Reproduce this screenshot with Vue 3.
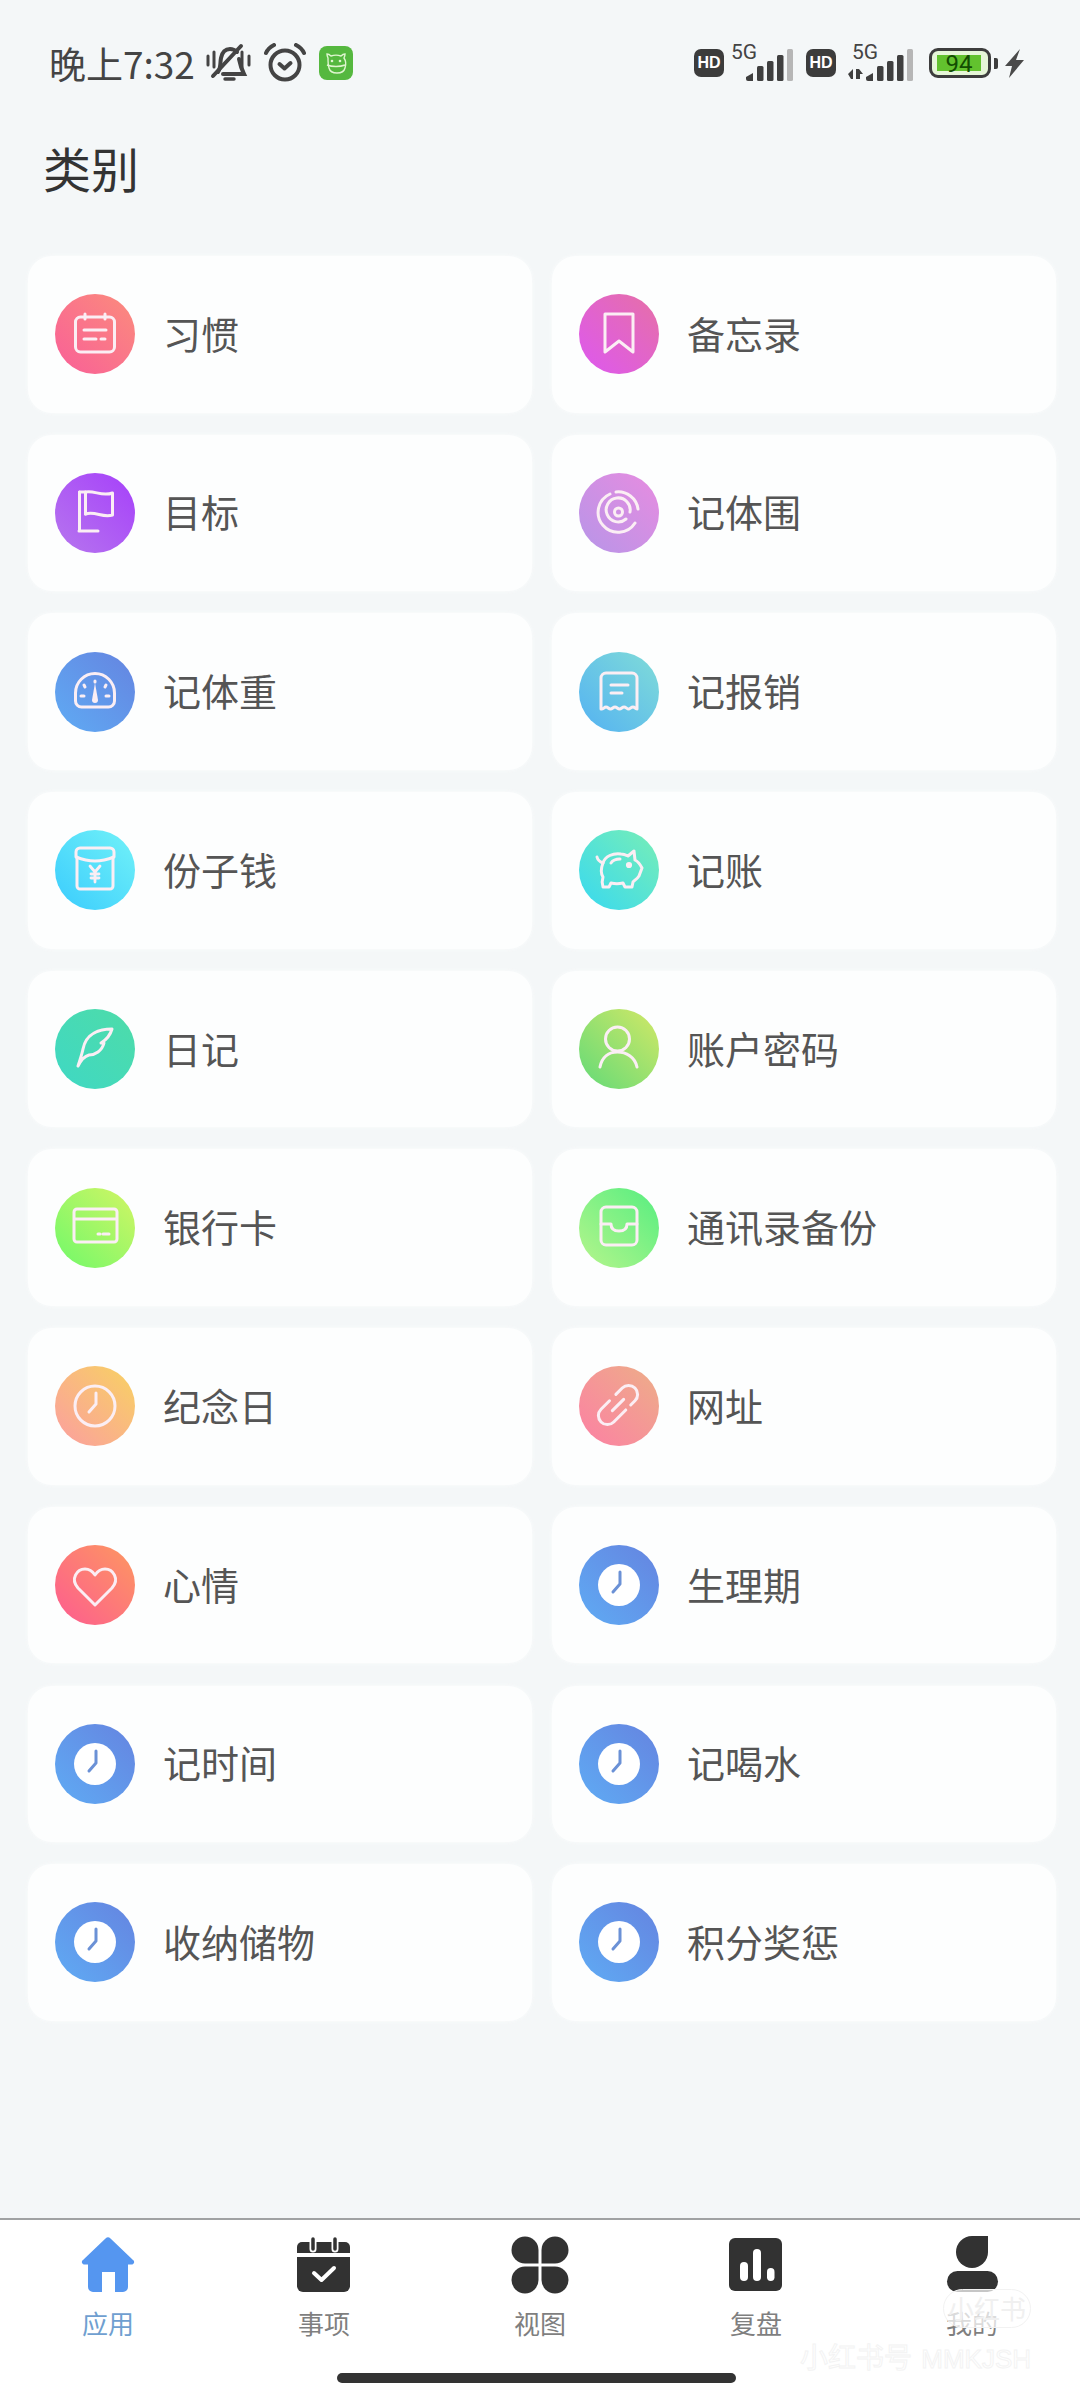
<template>
  <div class="page">
    <header class="status">
      <div class="status-left">
        <span class="time">晚上7:32</span>
        <svg class="bell" width="46" height="40" viewBox="0 0 46 40" fill="none" stroke="#444" stroke-width="4" stroke-linecap="round">
          <path d="M2 13v9M8 9v15M36 9v15M43 13v9" stroke-width="3" />
          <path d="M12 29c3-4 2-9 3-14 1-5 4-9 9-9 3 0 5 1 7 3" />
          <path d="M33 16c1 5 2 9 5 15H17" />
          <path d="M7 33 35 3" />
          <path d="M19 36h9" stroke-width="3.400" />
        </svg>
        <svg class="alarm" width="42" height="40" viewBox="0 0 42 40" fill="none" stroke="#444" stroke-width="4" stroke-linecap="round" stroke-linejoin="round">
          <circle cx="21" cy="22" r="14.500" />
          <path d="M2 10c1.500-3.500 4-6 8-8M40 10c-1.500-3.500-4-6-8-8" />
          <path d="m15.500 21 5 4.500 6-5.500" />
        </svg>
        <svg class="app" width="34" height="34" viewBox="0 0 34 34" fill="none">
          <rect width="34" height="34" rx="8" fill="#55b83f" />
          <g stroke="#dff5cf" stroke-width="1.400">
            <path d="M9 12c-1-2-1-3-1-4 2 0 3 1 4 2 3-1 7-1 10 0 1-1 2-2 4-2 0 1 0 2-1 4 2 3 2 7 1 10-1 4-5 5-8 5s-7-1-8-5c-1-3-1-7-1-10Z" />
            <path d="M8 19c5 2 13 2 18 0" />
          </g>
          <circle cx="13" cy="15" r="1.300" fill="#dff5cf" />
          <circle cx="21" cy="15" r="1.300" fill="#dff5cf" />
        </svg>
      </div>
      <div class="status-right">
        <span class="hd">HD</span>
        <div class="net">
          <span class="net-label">5G</span>
          <svg class="net-bars" width="48" height="32" viewBox="0 0 48 32" fill="#3f3f3f">
            <path d="M0 28l7-4v8H2a2 2 0 0 1-2-2Z" />
            <rect x="11" y="17" width="6.500" height="15" rx="1.500" />
            <rect x="21" y="12" width="6.500" height="20" rx="1.500" />
            <rect x="31" y="6" width="6.500" height="26" rx="1.500" />
            <rect x="41" y="0" width="6" height="32" rx="1.500" fill="#b6b6b6" />
          </svg>
        </div>
        <span class="hd second">HD</span>
        <div class="net net-wide">
          <span class="net-label">5G</span>
          <svg class="net-bars" width="66" height="32" viewBox="0 0 66 32" fill="#3f3f3f">
            <path d="M0 25l5-5v10H3ZM8 20h3l4 5h-3v5H8Z" />
            <path d="M18 28l7-4v8h-5a2 2 0 0 1-2-2Z" />
            <rect x="29" y="17" width="6.500" height="15" rx="1.500" />
            <rect x="39" y="12" width="6.500" height="20" rx="1.500" />
            <rect x="49" y="6" width="6.500" height="26" rx="1.500" />
            <rect x="59" y="0" width="6" height="32" rx="1.500" fill="#b6b6b6" />
          </svg>
        </div>
        <div class="battery">
          <span class="battery-fill">94</span>
        </div>
        <span class="battery-tip"></span>
        <svg class="bolt" width="19" height="29" viewBox="0 0 19 29" fill="#4a4a4a">
          <path d="M15 0 0 17h7L4 29 19 11h-8Z" />
        </svg>
      </div>
    </header>

    <main class="content">
      <h1 class="title">类别</h1>
      <div class="grid">
        <div v-for="item in items" :key="item.label" class="card">
          <div class="badge" :style="{ background: `linear-gradient(45deg, ${item.from}, ${item.to})` }">
            <svg width="80" height="80" viewBox="0 0 80 80" fill="none" stroke="#fbeef4" stroke-width="3" stroke-linecap="round" stroke-linejoin="round">
              <g v-if="item.icon === 'habit'">
                <rect x="20.500" y="23" width="39" height="35" rx="5" />
                <path d="M30 20v5M50 20v5M29 36h22M29 45h12M46 45h4" />
              </g>
              <path v-else-if="item.icon === 'bookmark'" d="M26 20h28v38L40 47 26 58Z" />
              <g v-else-if="item.icon === 'flag'">
                <path d="M24.500 19v39M24 58h19" />
                <path d="M24.500 19h6v22" />
                <path d="M30.500 19c9-2 16 5 27 1v22c-10 3-17-4-27-1" />
              </g>
              <g v-else-if="item.icon === 'rings'">
                <circle cx="39.500" cy="39" r="4" />
                <path d="M47 46a12 12 0 1 1 4-7" />
                <path d="M37 19a20 20 0 0 1 22 17M56 50a20 20 0 1 1-25-29" />
              </g>
              <g v-else-if="item.icon === 'gauge'">
                <path d="M20.500 41a19.500 19.500 0 0 1 39 0v8a6 6 0 0 1-6 6h-27a6 6 0 0 1-6-6Z" />
                <path d="M40 29v1M29 33l1 2M51 33l-1 2M26 44h3M51 44h3" stroke-width="3" />
                <path d="M40 31l3 17a3 3 0 0 1-6 0Z" fill="#fbeef4" stroke="none" />
              </g>
              <g v-else-if="item.icon === 'receipt'">
                <path d="M22 57V26a5 5 0 0 1 5-5h26a5 5 0 0 1 5 5v31c-2 0-2-2-4-2s-3 2-4.500 2-2.500-2-4.500-2-2.500 2-4.500 2-2.500-2-4.500-2-2.500 2-4.500 2-2.500-2-4.500-2-2 2-4 2Z" />
                <path d="M32 33h17M32 41h11" />
              </g>
              <g v-else-if="item.icon === 'envelope'">
                <path d="M22 27v29a3 3 0 0 0 3 3h30a3 3 0 0 0 3-3V27" />
                <path d="M21 27v-5a4 4 0 0 1 4-4h30a4 4 0 0 1 4 4v5c-5 2-12 4-19 4s-14-2-19-4Z" />
                <path d="m35 36 5 6 5-6M40 42v10M36 44h8M36 48h8" stroke-width="2.800" />
              </g>
              <g v-else-if="item.icon === 'pig'">
                <path d="M24 33c2-7 10-10 18-9 3 0 5 1 7 2l6-5 1 9c4 2 6 6 7 8l-3 8c-2 3-4 4-6 6l-1 5h-7l-2-4c-4 1-8 1-12 0l-2 4h-6c-1-3-1-7 0-10-3-5-2-9 0-14Z" />
                <path d="M18 27c1 4 3 5 6 6M32 33c2-3 5-4 9-4" />
                <circle cx="50" cy="35" r="1.600" fill="#fbeef4" />
              </g>
              <g v-else-if="item.icon === 'feather'">
                <path d="M57 20c-12 0-26 4-29 20-1 5-3 11-5 17 4-8 7-10 11-11 6 0 13-4 15-12l-3 0c5-3 9-7 11-14Z" />
              </g>
              <g v-else-if="item.icon === 'person'">
                <circle cx="38.500" cy="30" r="12" />
                <path d="M21 58c2-10 9-15 17.500-15S56 48 58 58" />
              </g>
              <g v-else-if="item.icon === 'card'">
                <rect x="19" y="21" width="43" height="33" rx="3" />
                <path d="M20 31h41M43 46h2M48 46h6" />
              </g>
              <g v-else-if="item.icon === 'tray'">
                <rect x="22" y="19" width="36" height="38" rx="5" />
                <path d="M22 36h10c0 5 3 7 8 7s8-2 8-7h10" />
              </g>
              <g v-else-if="item.icon === 'anniversary'">
                <circle cx="40" cy="40" r="20" />
                <path d="M41 27v11l-7 8" />
              </g>
              <g v-else-if="item.icon === 'link'" transform="translate(39 39) rotate(-45)">
                <path d="M-3-9h-12a9 9 0 0 0 0 18H2" />
                <path d="M6-9h9a9 9 0 0 1 0 18H9" />
                <path d="M-8 0H8" />
              </g>
              <path v-else-if="item.icon === 'heart'" d="M40 60 23 43c-8-9-1-19 7-19 5 0 8 3 10 6 2-3 5-6 10-6 8 0 15 10 7 19Z" />
              <g v-else>
                <circle cx="40" cy="40" r="21" fill="#fff" stroke="none" />
                <path d="M41 27v12l-7 8" stroke="#6b91d6" />
              </g>
            </svg>
          </div>
          <span class="label">{{ item.label }}</span>
        </div>
      </div>
    </main>

    <nav class="nav">
      <div class="tabs">
        <div class="tab active">
          <svg width="60" height="60" viewBox="0 0 60 60" fill="#5596f0">
            <path d="M27.500 3.500a3.500 3.500 0 0 1 5 0L55 25a2.500 2.500 0 0 1-2 4.500h-3V52a5 5 0 0 1-5 5h-8V37H24v20h-9a5 5 0 0 1-5-5V29.500H7a2.500 2.500 0 0 1-2-4.500Z" />
          </svg>
          <span>应用</span>
        </div>
        <div class="tab">
          <svg width="60" height="60" viewBox="0 0 60 60" fill="#323232">
            <path d="M9 7h42a5 5 0 0 1 5 5v6H3v-6a5 5 0 0 1 5-5Z" />
            <path d="M3 22h53v29a6 6 0 0 1-6 6H9a6 6 0 0 1-6-6Z" />
            <path d="M19 4v10M41 4v10" stroke="#fff" stroke-width="7" stroke-linecap="round" />
            <path d="M19 4v10M41 4v10" stroke="#323232" stroke-width="3.500" stroke-linecap="round" />
            <path d="m20 38 7.500 7L40 33" fill="none" stroke="#fff" stroke-width="4" stroke-linecap="round" stroke-linejoin="round" />
          </svg>
          <span>事项</span>
        </div>
        <div class="tab">
          <svg width="60" height="60" viewBox="0 0 60 60" fill="#323232">
            <g v-for="angle in [0, 90, 180, 270]" :key="angle" :transform="`rotate(${angle} 30 30)`">
              <path d="M15 1.500A13.500 13.500 0 0 0 15 28.500H28.500V15A13.500 13.500 0 0 0 15 1.500Z" />
            </g>
          </svg>
          <span>视图</span>
        </div>
        <div class="tab">
          <svg width="60" height="60" viewBox="0 0 60 60">
            <rect x="3" y="3" width="53" height="53" rx="6" fill="#323232" />
            <rect x="14" y="27" width="8" height="19" rx="4" fill="#fff" />
            <rect x="27" y="14" width="8" height="32" rx="4" fill="#fff" />
            <rect x="41" y="33" width="7.500" height="13" rx="3.700" fill="#fff" />
          </svg>
          <span>复盘</span>
        </div>
        <div class="tab">
          <svg width="60" height="60" viewBox="0 0 60 60" fill="#323232">
            <path d="M30 1h16v16A16 16 0 1 1 30 1Z" />
            <rect x="5" y="36" width="51" height="21" rx="10.500" />
          </svg>
          <span>我的</span>
        </div>
      </div>
      <div class="home-bar"></div>
      <div class="mark-pill">小红书</div>
      <div class="mark-text">小红书号 <span>MMKJSH</span></div>
    </nav>
  </div>
</template>

<script setup>
const blue = { from: '#5fabf4', to: '#6584e0', icon: 'clock' }

const items = [
  { label: '习惯', from: '#f95f98', to: '#fb8c7c', icon: 'habit' },
  { label: '备忘录', from: '#dd58f0', to: '#e670a6', icon: 'bookmark' },
  { label: '目标', from: '#b676ee', to: '#a640fa', icon: 'flag' },
  { label: '记体围', from: '#b795e8', to: '#e78ce0', icon: 'rings' },
  { label: '记体重', from: '#5fabf4', to: '#6584e0', icon: 'gauge' },
  { label: '记报销', from: '#54b2f2', to: '#80dcd8', icon: 'receipt' },
  { label: '份子钱', from: '#3accfd', to: '#72f2f8', icon: 'envelope' },
  { label: '记账', from: '#38d9f0', to: '#78eeb6', icon: 'pig' },
  { label: '日记', from: '#3fd8c4', to: '#4edca8', icon: 'feather' },
  { label: '账户密码', from: '#62da78', to: '#d2e866', icon: 'person' },
  { label: '银行卡', from: '#70f96a', to: '#d2f564', icon: 'card' },
  { label: '通讯录备份', from: '#b6f58c', to: '#56ee80', icon: 'tray' },
  { label: '纪念日', from: '#fb9ea0', to: '#f8d262', icon: 'anniversary' },
  { label: '网址', from: '#fc80a4', to: '#edae88', icon: 'link' },
  { label: '心情', from: '#fd5c90', to: '#fd9860', icon: 'heart' },
  { label: '生理期', ...blue },
  { label: '记时间', ...blue },
  { label: '记喝水', ...blue },
  { label: '收纳储物', ...blue },
  { label: '积分奖惩', ...blue }
]
</script>

<style>
html,
body {
  margin: 0;
  background: #f4f7f8;
}
</style>

<style scoped>
.page {
  display: flex;
  flex-direction: column;
  height: 2400px;
  background: #f4f7f8;
  font-family: "Noto Sans CJK SC", "Noto Sans", sans-serif;
  overflow: hidden;
}

.status {
  display: flex;
  justify-content: space-between;
  align-items: center;
  height: 126px;
  padding: 0 56px 0 49px;
  box-sizing: border-box;
  flex-shrink: 0;
}

.status-left,
.status-right {
  display: flex;
  align-items: center;
}

.time {
  width: 146px;
  font-size: 37px;
  line-height: 44px;
  color: #444;
  white-space: nowrap;
}

.bell {
  margin-left: 11px;
}

.alarm {
  margin-left: 12px;
}

.app {
  margin-left: 13px;
}

.hd {
  width: 30px;
  height: 28px;
  border-radius: 7px;
  background: #3c3c3c;
  color: #fff;
  font-family: "Liberation Sans", sans-serif;
  font-size: 16px;
  font-weight: 700;
  line-height: 28px;
  text-align: center;
}

.hd.second {
  margin-left: 12px;
}

.net {
  position: relative;
  width: 63px;
  height: 36px;
  margin-left: 7px;
}

.net-wide {
  width: 66px;
  margin-left: 12px;
}

.net-label {
  position: absolute;
  top: -5px;
  left: 0;
  color: #444;
  font-family: Roboto, sans-serif;
  font-size: 21px;
  line-height: 24px;
}

.net-wide .net-label {
  left: 4px;
}

.net-bars {
  position: absolute;
  right: 0;
  bottom: 0;
}

.battery {
  display: flex;
  width: 62px;
  height: 30px;
  margin-left: 15px;
  padding: 4px 6px 4px 5px;
  box-sizing: border-box;
  border: 3px solid #3d3d3d;
  border-radius: 9px;
  background: #e6f6d8;
}

.battery-fill {
  width: 44px;
  background: #62c22e;
  color: #124d02;
  font-family: Roboto, sans-serif;
  font-size: 24px;
  line-height: 18px;
  text-align: center;
}

.battery-tip {
  width: 4px;
  height: 11px;
  margin-left: 3px;
  border-radius: 0 2px 2px 0;
  background: #3d3d3d;
}

.bolt {
  margin-left: 7px;
}

.content {
  flex: 1;
}

.title {
  margin: 0 0 0 43px;
  color: #333;
  font-size: 48px;
  font-weight: 400;
  line-height: 82px;
}

.grid {
  display: grid;
  grid-template-columns: 504px 504px;
  grid-auto-rows: 156.500px;
  column-gap: 20px;
  row-gap: 22.200px;
  margin: 48px 0 0 28px;
}

.card {
  display: flex;
  align-items: center;
  padding-left: 27px;
  border-radius: 24px;
  background: #fdfefe;
  box-shadow: 0 0 5px rgba(253, 254, 254, 0.8);
}

.badge {
  display: flex;
  width: 80px;
  height: 80px;
  border-radius: 50%;
  flex-shrink: 0;
}

.label {
  margin: -3px 0 0 28px;
  color: #555;
  font-size: 38px;
  line-height: 50px;
}

.nav {
  position: relative;
  height: 182px;
  border-top: 2px solid #a0a2a3;
  box-sizing: border-box;
  background: #fff;
  flex-shrink: 0;
}

.tabs {
  display: grid;
  grid-template-columns: repeat(5, 1fr);
  padding-top: 15px;
}

.tab {
  display: flex;
  flex-direction: column;
  align-items: center;
  color: #7f7f7f;
  font-size: 26px;
  line-height: 34px;
}

.tab span {
  margin-top: 11px;
}

.tab.active {
  color: #6f9fd0;
}

.home-bar {
  width: 399px;
  height: 10px;
  margin: 33px 0 0 337px;
  border-radius: 5px;
  background: #333;
}

.mark-pill {
  position: absolute;
  top: 69px;
  left: 943px;
  width: 88px;
  height: 39px;
  border: 1px solid #f2f2f2;
  border-radius: 20px;
  box-sizing: border-box;
  background: rgba(255, 255, 255, 0.72);
  color: #f0f0f0;
  font-size: 26px;
  line-height: 36px;
  text-align: center;
}

.mark-text {
  position: absolute;
  top: 118px;
  left: 800px;
  color: #fff;
  font-size: 28px;
  line-height: 36px;
  white-space: nowrap;
  -webkit-text-stroke: 1px #f3f3f3;
}

.mark-text span {
  margin-left: 3px;
  font-family: "Liberation Sans", sans-serif;
  font-size: 26px;
}
</style>
